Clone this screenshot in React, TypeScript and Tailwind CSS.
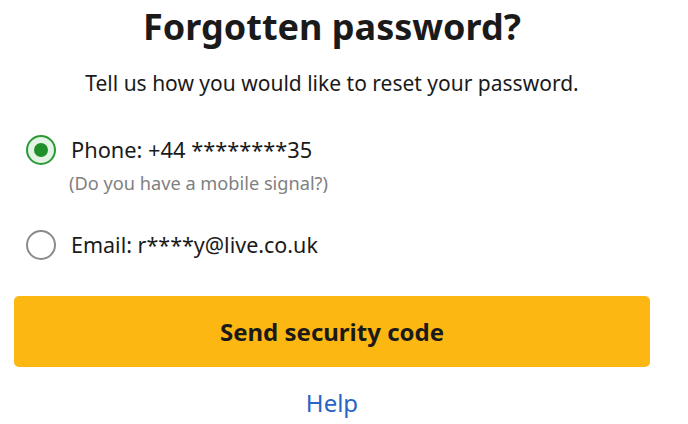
import React from "react";

export default function App() {
  return (
    <div className="w-[688px] h-[424px] bg-white overflow-hidden" style={{ fontFamily: '"Noto Sans", "Open Sans", sans-serif' }}>
      <div className="ml-[14px] w-[636px] flex flex-col">
        <h1 className="text-center text-[36px] leading-[48px] font-bold text-[#1a1a1a] mt-[3px]">Forgotten password?</h1>
        <p className="text-center text-[21px] leading-[28px] text-[#1a1a1a] mt-[18px]">Tell us how you would like to reset your password.</p>
        <div className="mt-[38px] flex items-center gap-[15px] pl-[12px]">
          <span className="w-[30px] h-[30px] rounded-full border-2 border-[#2a9a35] bg-[#e3f3e4] flex items-center justify-center">
            <span className="w-[14px] h-[14px] rounded-full bg-[#1f8f2a]" />
          </span>
          <span className="text-[21.8px] leading-[28px] text-[#1a1a1a]">Phone: +44 ********35</span>
        </div>
        <p className="pl-[55px] text-[18.2px] leading-[24px] text-[#808080] mt-[6px]">(Do you have a mobile signal?)</p>
        <div className="mt-[35px] flex items-center gap-[15px] pl-[12px]">
          <span className="w-[30px] h-[30px] rounded-full border-2 border-[#8a8a8a] bg-white" />
          <span className="text-[21.5px] leading-[28px] text-[#1a1a1a]">Email: r****y@live.co.uk</span>
        </div>
        <button className="mt-[36px] h-[71px] w-full rounded-[5px] bg-[#fdb713] text-[24px] font-bold text-[#1a1a1a]">Send security code</button>
        <a className="mt-[21px] text-center text-[24px] leading-[30px] text-[#2a63c6]">Help</a>
      </div>
    </div>
  );
}
